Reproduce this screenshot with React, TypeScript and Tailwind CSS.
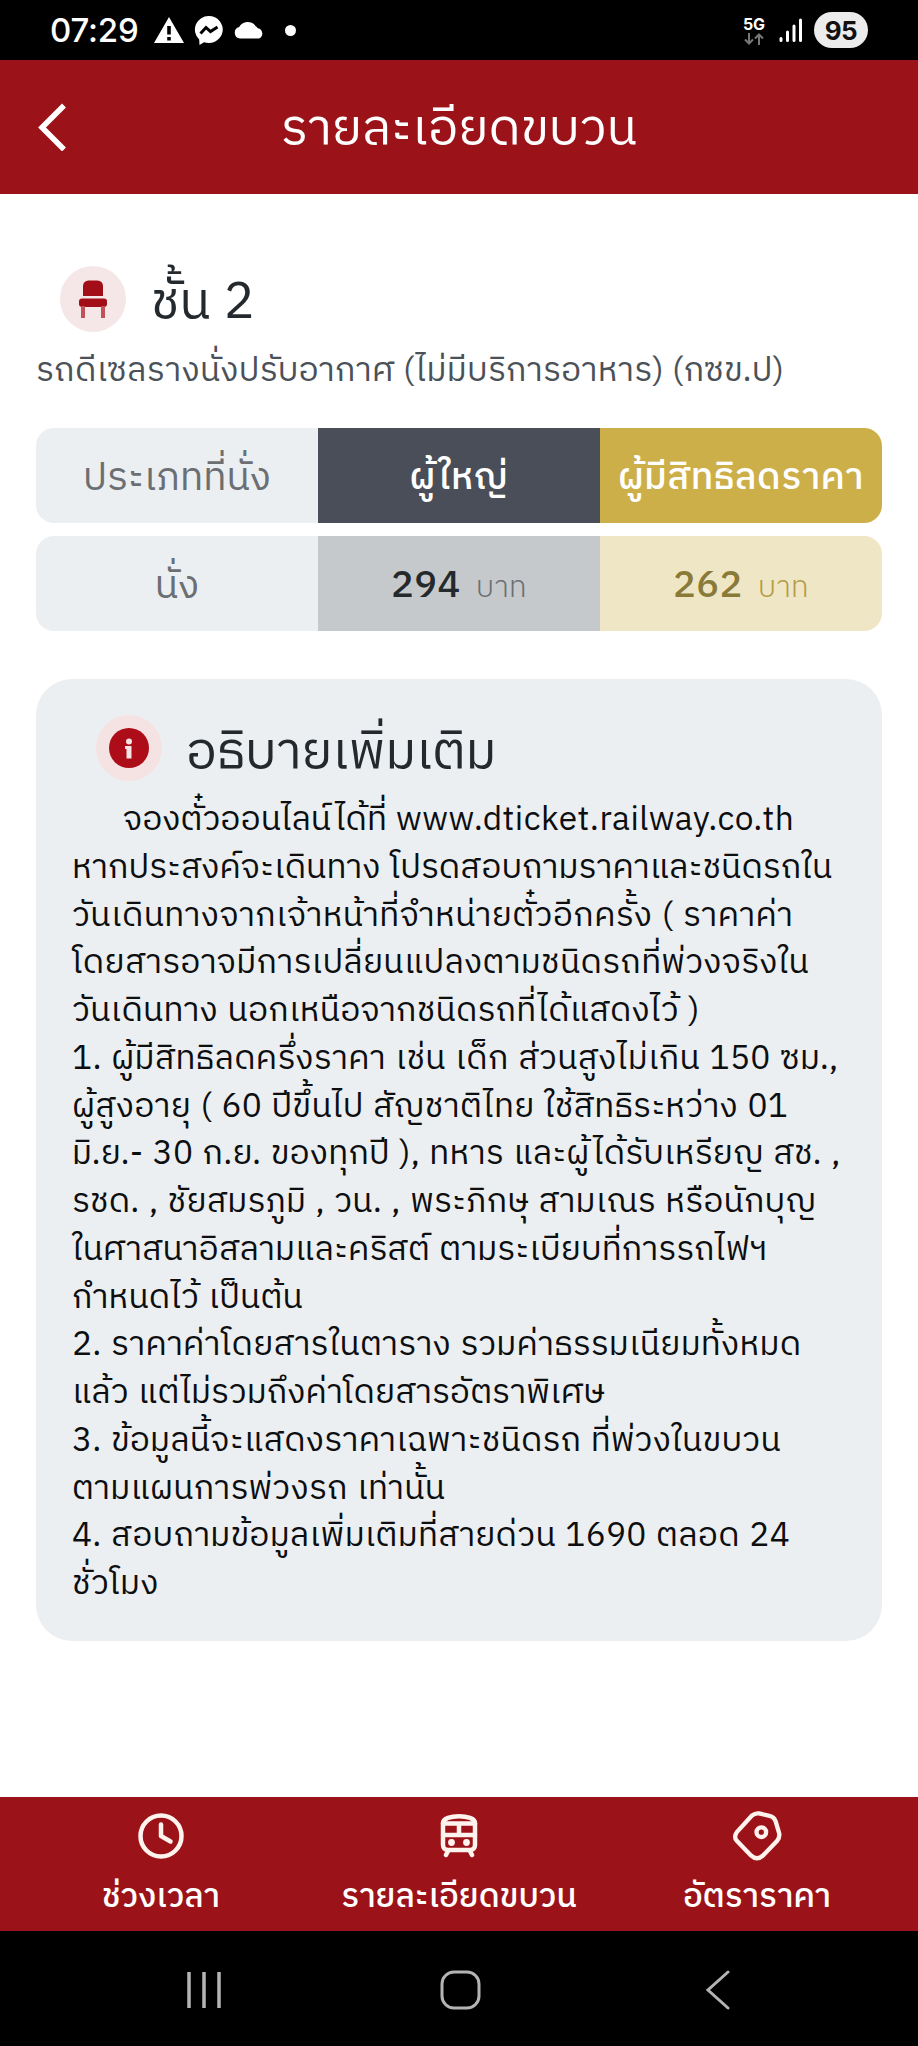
import type { ReactNode } from 'react';

type NoteLine = { text: string; className: string };

const noteLines: NoteLine[] = [
  { text: 'หากประสงค์จะเดินทาง โปรดสอบถามราคาและชนิดรถใน', className: 'tracking-[0.02px]' },
  { text: 'วันเดินทางจากเจ้าหน้าที่จำหน่ายตั๋วอีกครั้ง ( ราคาค่า', className: 'tracking-[0.35px]' },
  { text: 'โดยสารอาจมีการเปลี่ยนแปลงตามชนิดรถที่พ่วงจริงใน', className: 'tracking-[0.27px]' },
  { text: 'วันเดินทาง นอกเหนือจากชนิดรถที่ได้แสดงไว้ )', className: 'tracking-[0.18px]' },
  { text: '1. ผู้มีสิทธิลดครึ่งราคา เช่น เด็ก ส่วนสูงไม่เกิน 150 ซม.,', className: 'tracking-[0.28px]' },
  { text: 'ผู้สูงอายุ ( 60 ปีขึ้นไป สัญชาติไทย ใช้สิทธิระหว่าง 01', className: 'tracking-[0.23px]' },
  { text: 'มิ.ย.- 30 ก.ย. ของทุกปี ), ทหาร และผู้ได้รับเหรียญ สช. ,', className: 'tracking-[0.18px]' },
  { text: 'รชด. , ชัยสมรภูมิ , วน. , พระภิกษุ สามเณร หรือนักบุญ', className: 'tracking-[0.16px]' },
  { text: 'ในศาสนาอิสลามและคริสต์ ตามระเบียบที่การรถไฟฯ', className: 'tracking-[0.1px]' },
  { text: 'กำหนดไว้ เป็นต้น', className: 'tracking-[0.15px]' },
  { text: '2. ราคาค่าโดยสารในตาราง รวมค่าธรรมเนียมทั้งหมด', className: 'tracking-[0.22px]' },
  { text: 'แล้ว แต่ไม่รวมถึงค่าโดยสารอัตราพิเศษ', className: 'tracking-[0.06px]' },
  { text: '3. ข้อมูลนี้จะแสดงราคาเฉพาะชนิดรถ ที่พ่วงในขบวน', className: 'tracking-[0.2px]' },
  { text: 'ตามแผนการพ่วงรถ เท่านั้น', className: 'tracking-[0.23px]' },
  { text: '4. สอบถามข้อมูลเพิ่มเติมที่สายด่วน 1690 ตลอด 24', className: 'tracking-[0.22px]' },
  { text: 'ชั่วโมง', className: 'tracking-[0.3px]' },
];

export default function App() {
  return (
    <div className="flex h-[2046px] w-[918px] flex-col overflow-hidden bg-white font-['IBM_Plex_Sans_Thai','Noto_Sans_Thai',sans-serif]">
      <StatusBar />

      {/* Header */}
      <header className="grid h-[134px] shrink-0 grid-cols-[120px_1fr_120px] items-center bg-[#9b1218] text-white">
        <svg className="ml-9" width="32" height="48" viewBox="0 0 32 48" fill="none" stroke="currentColor" strokeWidth="5.5">
          <path d="M28 2.5 6 24.5l22 22" />
        </svg>
        <h1 className="pt-[5px] text-center text-[50.3px] leading-[60px]">รายละเอียดขบวน</h1>
      </header>

      <main className="flex-1 px-9">
        {/* Seat class */}
        <div className="mt-[72px] flex h-[66px] items-center pl-6">
          <div className="flex size-[66px] items-center justify-center rounded-full bg-[#f5e6e7]">
            <ChairIcon />
          </div>
          <h2 className="ml-[25px] mt-2 text-[51.3px] leading-[66px] text-[#24292d] [word-spacing:1px]">ชั้น 2</h2>
        </div>
        <p className="mt-[15px] h-[50px] whitespace-nowrap text-[33.5px] leading-[50px] tracking-[0.3px] text-[#4b5158]">
          รถดีเซลรางนั่งปรับอากาศ (ไม่มีบริการอาหาร) (กซข.ป)
        </p>

        {/* Fare table */}
        <div className="mt-[31px] space-y-[13px] text-[38px] font-medium leading-[50px]">
          <div className="grid h-[95px] grid-cols-3 overflow-hidden rounded-[18px]">
            <Cell className="bg-[#eceff1] text-[39px] font-normal text-[#6b6f73]">ประเภทที่นั่ง</Cell>
            <Cell className="bg-[#4a4e59] text-[37px] tracking-[0.5px] text-white">ผู้ใหญ่</Cell>
            <Cell className="bg-[#cdaf4a] text-[37px] tracking-[0.5px] text-white">ผู้มีสิทธิลดราคา</Cell>
          </div>
          <div className="grid h-[95px] grid-cols-3 overflow-hidden rounded-[18px]">
            <Cell className="bg-[#eceff1] text-[39px] font-normal text-[#6b6f73]">นั่ง</Cell>
            <Cell className="bg-[#c6c9cc] tracking-[0.4px] text-[#24292d]">
              294 <span className="ml-1.5 text-[30px] font-light text-[#6b6f73]">บาท</span>
            </Cell>
            <Cell className="bg-[#efe6c5] tracking-[0.4px] text-[#8a7a38]">
              262 <span className="ml-1.5 text-[30px] font-light text-[#b39c45]">บาท</span>
            </Cell>
          </div>
        </div>

        {/* Notes */}
        <section className="mt-12 h-[962px] rounded-[36px] bg-[#eceff1] px-9 pt-9">
          <div className="flex h-[66px] items-center pl-6">
            <div className="flex size-[66px] items-center justify-center rounded-full bg-[#f5e3e4]">
              <InfoIcon />
            </div>
            <h2 className="ml-6 mt-2.5 text-[51.3px] leading-[66px] text-[#24292d]">อธิบายเพิ่มเติม</h2>
          </div>
          <div className="mt-4 whitespace-nowrap text-[33.5px] leading-[47.75px] text-[#0c0e10] [word-spacing:1.3px]">
            <p className="pl-[51px] tracking-[-0.05px]">
              จองตั๋วออนไลน์ได้ที่ <span className="tracking-[0.5px]">www.dticket.railway.co.th</span>
            </p>
            {noteLines.map((line) => (
              <p key={line.text} className={line.className}>{line.text}</p>
            ))}
          </div>
        </section>
      </main>

      {/* Tabs */}
      <nav className="flex h-[134px] shrink-0 bg-[#9b1218] text-white">
        <Tab className="w-[322px]" label="ช่วงเวลา" icon={<ClockIcon />} />
        <Tab className="w-[274px]" label="รายละเอียดขบวน" icon={<TrainIcon />} />
        <Tab className="w-[322px]" label="อัตราราคา" icon={<TagIcon />} />
      </nav>

      {/* Android navigation */}
      <div className="flex h-[115px] shrink-0 items-center bg-black text-[#b4b4b4]">
        <svg className="ml-[186px]" width="36" height="40" viewBox="0 0 36 40" fill="none" stroke="currentColor" strokeWidth="3.5">
          <path d="M3 3v36M18 3v36M33 3v36" />
        </svg>
        <svg className="ml-[218px]" width="42" height="42" viewBox="0 0 42 42" fill="none" stroke="currentColor" strokeWidth="3">
          <rect x="2" y="4" width="37" height="36" rx="12" />
        </svg>
        <svg className="ml-[223px]" width="28" height="42" viewBox="0 0 28 42" fill="none" stroke="currentColor" strokeWidth="3" strokeLinecap="round">
          <path d="M23 4 3 22l20 18" />
        </svg>
      </div>
    </div>
  );
}

function StatusBar() {
  return (
    <div className="flex h-[60px] shrink-0 items-center bg-black font-[Inter,sans-serif] text-white">
      <span className="ml-[50px] w-[90px] whitespace-nowrap text-[33px] font-medium leading-[40px] tracking-[-0.2px]">07:29</span>
      <svg className="ml-[14px]" width="30" height="28" viewBox="0 0 30 28" fill="currentColor">
        <path fillRule="evenodd" d="M15 1 30 27H0ZM13.2 10v8.5h3.6V10Zm0 11v3.5h3.6V21Z" />
      </svg>
      <svg className="ml-[10px]" width="30" height="30" viewBox="0 0 30 30">
        <path d="M15 1a14 13.5 0 1 1-5 26.2L5.5 30l-.3-5.5A13.6 13.6 0 0 1 15 1Z" fill="currentColor" />
        <path d="m6.5 18.5 5.5-6 4.5 4 7-4.5" fill="none" stroke="#000" strokeWidth="3" />
      </svg>
      <svg className="ml-[10px]" width="31" height="18" viewBox="0 0 31 18" fill="currentColor">
        <path d="M6 17.5a5.8 5.8 0 0 1-.8-11.4A9.5 9.5 0 0 1 21.5 5a7 7 0 0 1 2.3 2.2A5.4 5.4 0 0 1 25 17.5Z" />
      </svg>
      <span className="ml-[20px] size-[11px] rounded-full bg-white" />

      <div className="ml-auto mr-[14px] flex w-[22px] flex-col items-center">
        <span className="text-[16px] font-bold leading-[17px]">5G</span>
        <svg width="20" height="12" viewBox="0 0 20 12" fill="none" stroke="#777" strokeWidth="2">
          <path d="M5 0v10M1 6.5l4 4 4-4M15 12V2M11 5.5l4-4 4 4" />
        </svg>
      </div>
      <svg className="mr-[11px]" width="24" height="25" viewBox="0 0 24 25" fill="none" stroke="currentColor" strokeWidth="3" strokeLinecap="round">
        <path d="M2 20.5v2M8.5 14v8.5M15 8v14.5M21.5 2v20.5" />
      </svg>
      <span className="mr-[50px] flex h-9 w-[54px] items-center justify-center rounded-full bg-[#ececec] text-[26px] font-bold tracking-[-0.5px] text-[#111]">
        95
      </span>
    </div>
  );
}

function Cell({ className, children }: { className: string; children: ReactNode }) {
  return (
    <div className={`flex items-center justify-center whitespace-nowrap pt-[7px] ${className}`}>
      <p>{children}</p>
    </div>
  );
}

function Tab({ className, label, icon }: { className: string; label: string; icon: ReactNode }) {
  return (
    <div className={`flex flex-col items-center pt-[13px] ${className}`}>
      <div className="flex h-[52px] items-center">{icon}</div>
      <span className="mt-3 whitespace-nowrap text-[33px] font-medium leading-[48px]">{label}</span>
    </div>
  );
}

function ChairIcon() {
  return (
    <svg width="30" height="38" viewBox="0 0 30 38" fill="#a30d17">
      <path d="M5 16V6A5.5 5.5 0 0 1 10.5.5h9A5.5 5.5 0 0 1 25 6v10Z" />
      <rect x="1" y="18.5" width="28" height="8.5" rx="3" />
      <path d="M3 26h4v12H3zM23 26h4v12h-4z" fill="#c2525a" />
    </svg>
  );
}

function InfoIcon() {
  return (
    <svg width="40" height="40" viewBox="0 0 40 40">
      <circle cx="20" cy="20" r="20" fill="#ad0d18" />
      <g fill="#f4e4e5">
        <circle cx="20" cy="13.5" r="3" />
        <path d="M16 18h6.5v12.5h-5V21H16z" />
      </g>
    </svg>
  );
}

function ClockIcon() {
  return (
    <svg width="46" height="46" viewBox="0 0 46 46" fill="none" stroke="#fff3ee" strokeWidth="4.5" strokeLinecap="round" strokeLinejoin="round">
      <circle cx="23" cy="23" r="20.5" />
      <path d="M23 11.5V23l9.5 5.5" />
    </svg>
  );
}

function TrainIcon() {
  return (
    <svg width="38" height="44" viewBox="0 0 38 44" fill="none" stroke="#fff3ee" strokeWidth="4.5" strokeLinecap="round">
      <path d="M3 9c0-9 32-9 32 0v22c0 3-2 5-5 5H8c-3 0-5-2-5-5Z" />
      <path d="M3 9.5h32M3 21h32M19 10v11" />
      <path d="m8 37-2 4M30 37l2 4" />
      <circle cx="11.5" cy="28.5" r="3.4" fill="#fff3ee" stroke="none" />
      <circle cx="26.5" cy="28.5" r="3.4" fill="#fff3ee" stroke="none" />
    </svg>
  );
}

function TagIcon() {
  return (
    <svg width="50" height="50" viewBox="0 0 52 52" fill="none" stroke="#fff3ee" strokeWidth="4.5" strokeLinejoin="round">
      <path d="M21 4.5Q24 2 28 2.500L39 5Q44 6 45.500 11L49 23Q50 27 47 31L32 46.500Q26 52 20 46.500L5 31Q1.500 27 5 22Z" />
      <circle cx="30.5" cy="22" r="5" />
    </svg>
  );
}
